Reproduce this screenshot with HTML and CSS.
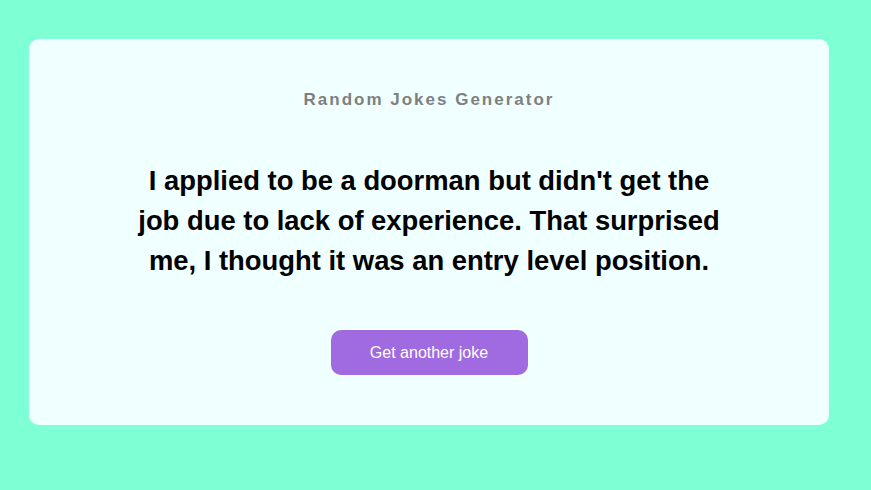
FILE: index.html
```html
<!DOCTYPE html>
<html>
<head>
<meta charset="utf-8">
<link rel="stylesheet" href="styles.css">
</head>
<body>
<div class="card">
  <h3 class="title">Random Jokes Generator</h3>
  <p class="joke">I applied to be a doorman but didn't get the job due to lack of experience. That surprised me, I thought it was an entry level position.</p>
  <button class="btn">Get another joke</button>
</div>
</body>
</html>
```
FILE: styles.css
```css
html, body {
  margin: 0;
  padding: 0;
}
body {
  background: #7fffd4;
  width: 871px;
  height: 490px;
  overflow: hidden;
  font-family: "Liberation Sans Narrow", "Liberation Sans", Arial, sans-serif;
}
.card {
  box-sizing: border-box;
  width: 800px;
  height: 386px;
  margin: 39px 0 0 29px;
  background: #f0ffff;
  border-radius: 10px;
  display: flex;
  flex-direction: column;
  align-items: center;
  padding-top: 50px;
}
.title {
  margin: 0;
  font-size: 17px;
  line-height: 22px;
  letter-spacing: 2px;
  color: #7f7f7f;
  font-weight: bold;
}
.joke {
  margin: 50px 0 0;
  width: 600px;
  text-align: center;
  font-size: 27.4px;
  line-height: 40px;
  font-weight: bold;
  color: #000;
}
.btn {
  margin-top: 49px;
  width: 197px;
  height: 45px;
  border: none;
  border-radius: 10px;
  background: #a06ae0;
  color: #fff;
  font-family: "Liberation Sans", Arial, sans-serif;
  font-size: 16px;
}
```
